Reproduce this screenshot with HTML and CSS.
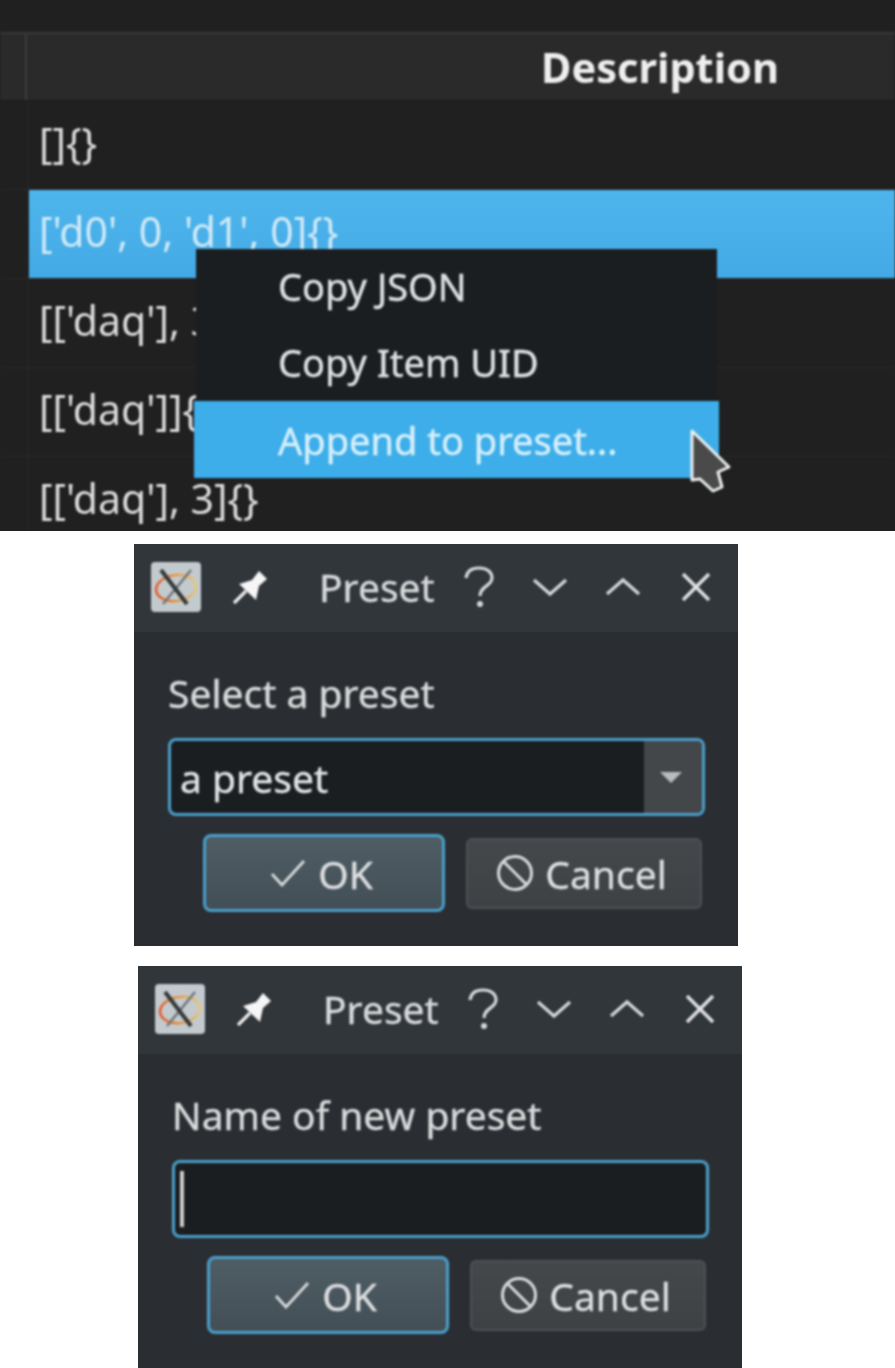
FILE: index.html
```html
<!DOCTYPE html>
<html lang="en">
<head>
  <meta charset="UTF-8" />
  <title>Preset dialogs</title>
  <link rel="stylesheet" href="styles.css">
</head>
<body>
  <svg class="defs" width="0" height="0">
    <defs>
      <linearGradient id="ring" x1="0" y1="0" x2="1" y2="0">
        <stop offset="0" stop-color="#df5a2c" />
        <stop offset="0.5" stop-color="#e8933f" />
        <stop offset="1" stop-color="#e6c77a" />
      </linearGradient>
    </defs>
    <symbol id="appIcon" viewBox="0 0 52 52">
      <rect x="1" y="1" width="50" height="50" rx="4" fill="#c3cacd" />
      <ellipse cx="26" cy="27" rx="20" ry="13" fill="none" stroke="url(#ring)" stroke-width="2.5" transform="rotate(-8 26 27)" />
      <path d="M41 9 L13 43" stroke="#6f7477" stroke-width="2.4" fill="none" />
      <path d="M11 9 L37 43" stroke="#33383b" stroke-width="4" fill="none" />
    </symbol>
    <symbol id="pin" viewBox="0 0 36 36">
      <path d="M2 34 L14 22" stroke="#eee" stroke-width="3.2" />
      <path d="M27 2 L35 10 L27 17 L24 31 L7 15 L20 11 Z" fill="#f6f6f6" />
    </symbol>
    <symbol id="help" viewBox="0 0 30 42">
      <path d="M2 12 C3 4 9 2 15 2 C23 2 28 6 28 12 C28 20 16 20 16 30" fill="none" stroke="#d6d8d9" stroke-width="3.2" />
      <circle cx="16" cy="38" r="3" fill="#d6d8d9" />
    </symbol>
    <symbol id="chevDown" viewBox="0 0 36 20">
      <path d="M2 3 L18 17 L34 3" fill="none" stroke="#d6d8d9" stroke-width="3.2" />
    </symbol>
    <symbol id="chevUp" viewBox="0 0 36 20">
      <path d="M2 17 L18 3 L34 17" fill="none" stroke="#d6d8d9" stroke-width="3.2" />
    </symbol>
    <symbol id="close" viewBox="0 0 30 30">
      <path d="M2 2 L28 28 M28 2 L2 28" fill="none" stroke="#e2e3e4" stroke-width="3.4" />
    </symbol>
    <symbol id="check" viewBox="0 0 36 28">
      <path d="M2 15 L12 26 L34 2" fill="none" stroke="#d8dadb" stroke-width="2.8" />
    </symbol>
    <symbol id="cancel" viewBox="0 0 38 38">
      <circle cx="19" cy="19" r="16.5" fill="none" stroke="#d8dadb" stroke-width="3" />
      <path d="M7 7 L31 31" stroke="#d8dadb" stroke-width="3" />
    </symbol>
  </svg>

  <div class="table-frame">
    <div class="table">
      <div class="topbar"></div>
      <div class="thead">
        <div class="corner"></div>
        <div class="th">Description</div>
      </div>
      <div class="row"><div class="row-head"></div><div class="cell">[]{}</div></div>
      <div class="row"><div class="row-head"></div><div class="cell selected">['d0', 0, 'd1', 0]{}</div></div>
      <div class="row"><div class="row-head"></div><div class="cell">[['daq'], 3, 4]{}</div></div>
      <div class="row"><div class="row-head"></div><div class="cell">[['daq']]{}</div></div>
      <div class="row last"><div class="row-head"></div><div class="cell">[['daq'], 3]{}</div></div>

      <div class="menu">
        <div class="menu-item">Copy JSON</div>
        <div class="menu-item">Copy Item UID</div>
        <div class="menu-item active">Append to preset...</div>
      </div>
      <svg class="cursor" width="42" height="64" viewBox="0 0 42 64">
        <path d="M2 2 L39 38 L28 43 L32 58 L23 62 L10 50 L2 51 Z" fill="#4a4a4a" stroke="#eceff0" stroke-width="3" stroke-linejoin="round" />
      </svg>
    </div>
  </div>

  <div class="dialog first">
    <div class="dialog-inner">
      <div class="titlebar">
        <svg class="app-icon"><use href="#appIcon" /></svg>
        <svg class="pin"><use href="#pin" /></svg>
        <span class="title">Preset</span>
        <svg class="help"><use href="#help" /></svg>
        <svg class="chev down"><use href="#chevDown" /></svg>
        <svg class="chev up"><use href="#chevUp" /></svg>
        <svg class="close"><use href="#close" /></svg>
      </div>
      <div class="content">
        <div class="label">Select a preset</div>
        <div class="field combo">
          <span class="combo-text">a preset</span>
          <span class="combo-btn"><span class="arrow"></span></span>
        </div>
        <div class="buttons">
          <div class="btn ok"><svg class="ico-check"><use href="#check" /></svg>OK</div>
          <div class="btn"><svg class="ico-cancel"><use href="#cancel" /></svg>Cancel</div>
        </div>
      </div>
    </div>
  </div>

  <div class="dialog second">
    <div class="dialog-inner">
      <div class="titlebar">
        <svg class="app-icon"><use href="#appIcon" /></svg>
        <svg class="pin"><use href="#pin" /></svg>
        <span class="title">Preset</span>
        <svg class="help"><use href="#help" /></svg>
        <svg class="chev down"><use href="#chevDown" /></svg>
        <svg class="chev up"><use href="#chevUp" /></svg>
        <svg class="close"><use href="#close" /></svg>
      </div>
      <div class="content">
        <div class="label">Name of new preset</div>
        <div class="field"><span class="caret"></span></div>
        <div class="buttons">
          <div class="btn ok"><svg class="ico-check"><use href="#check" /></svg>OK</div>
          <div class="btn"><svg class="ico-cancel"><use href="#cancel" /></svg>Cancel</div>
        </div>
      </div>
    </div>
  </div>
</body>
</html>
```

FILE: styles.css
```css
html, body {
  margin: 0;
  background: #fff;
}
body {
  width: 895px;
  height: 1368px;
  overflow: hidden;
  font-family: "Noto Sans", sans-serif;
  font-size: 39px;
  color: #d6d8d9;
  -webkit-text-stroke: 0.4px;
}
.defs {
  position: absolute;
}

/* table */
.table-frame {
  height: 531px;
  overflow: hidden;
  background: #202020;
}
.table {
  position: relative;
  height: 531px;
  filter: blur(0.8px);
}
.topbar {
  height: 32px;
  border-bottom: 2px solid #383838;
}
.thead {
  display: flex;
  height: 66px;
  background: #2a2a2a;
  border-bottom: 1px solid #1c1c1c;
}
.corner {
  width: 25px;
  border-right: 2px solid #3c3c3c;
}
.th {
  flex: 1;
  line-height: 66px;
  text-align: center;
  font-weight: 700;
  color: #eeeeee;
  font-size: 41.5px;
  padding-left: 398px;
  -webkit-text-stroke: 0;
}
.row {
  display: flex;
  height: 89px;
  box-sizing: border-box;
  border-bottom: 1px solid #2a2a2a;
}
.row-head {
  width: 28px;
  border-right: 1px solid #272727;
}
.cell {
  flex: 1;
  padding-left: 10px;
  line-height: 82px;
  font-size: 41px;
  color: #dcdcdc;
  -webkit-text-stroke: 0;
}
.cell.selected {
  background: linear-gradient(#4eb5ec, #43aae6);
  color: #cfe9f7;
}
.row.last {
  border-bottom: none;
  height: 75px;
}

/* context menu */
.menu {
  position: absolute;
  left: 196px;
  top: 249px;
  width: 521px;
  background: #1b1e20;
  font-size: 38px;
}
.menu-item {
  height: 76px;
  line-height: 75px;
  padding-left: 82px;
  color: #dfe0e1;
}
.menu-item.active {
  height: 77px;
  line-height: 78px;
  margin: 0 -2px;
  padding-left: 84px;
  background: #3daee9;
  color: #d6effb;
}
.cursor {
  position: absolute;
  left: 690px;
  top: 429px;
}

/* dialogs */
.dialog {
  width: 604px;
  height: 402px;
  overflow: hidden;
  background: linear-gradient(#31363b 88px, #2a2e32 88px);
}
.dialog-inner {
  height: 402px;
  filter: blur(0.8px);
}
.first {
  margin: 13px 0 0 134px;
}
.second {
  margin: 20px 0 0 138px;
}
.titlebar {
  display: flex;
  align-items: center;
  box-sizing: border-box;
  height: 88px;
  padding: 0 0 3px 16px;
}
.app-icon {
  width: 52px;
  height: 52px;
}
.pin {
  width: 36px;
  height: 36px;
  margin-left: 30px;
}
.title {
  margin-left: 51px;
  color: #d8dadb;
  width: 117px;
}
.help {
  width: 30px;
  height: 42px;
  margin-left: 28px;
}
.chev {
  width: 36px;
  height: 20px;
}
.chev.down {
  margin-left: 38px;
}
.chev.up {
  margin-left: 37px;
}
.close {
  width: 30px;
  height: 30px;
  margin-left: 40px;
}
.content {
  padding: 40px 33px 0 34px;
}
.label {
  height: 44px;
  line-height: 42px;
  color: #d8dadb;
}
.field {
  display: flex;
  align-items: center;
  height: 78px;
  box-sizing: border-box;
  margin-top: 22px;
  background: #1b1e20;
  border: 3px solid #4a9fcb;
  border-radius: 8px;
  overflow: hidden;
}
.combo-text {
  flex: 1;
  padding-left: 9px;
  color: #e2e3e4;
}
.combo-btn {
  display: flex;
  align-items: center;
  justify-content: center;
  box-sizing: border-box;
  width: 58px;
  height: 100%;
  padding-right: 5px;
  background: #44474a;
}
.arrow {
  width: 0;
  height: 0;
  border-left: 11px solid transparent;
  border-right: 11px solid transparent;
  border-top: 11px solid #b9bbbd;
}
.caret {
  width: 4px;
  height: 56px;
  margin-left: 5px;
  background: #cfcccb;
}
.buttons {
  display: flex;
  align-items: center;
  justify-content: flex-end;
  gap: 21px;
  height: 78px;
  margin-top: 18px;
  padding-right: 3px;
}
.btn {
  display: flex;
  align-items: center;
  justify-content: center;
  box-sizing: border-box;
  width: 236px;
  height: 71px;
  padding-right: 5px;
  background: linear-gradient(#45484b, #3f4245);
  border: 2px solid #4e5154;
  border-radius: 6px;
  color: #dcdee0;
}
.btn.ok {
  width: 242px;
  height: 78px;
  background: linear-gradient(#4f5d65, #434f56);
  border: 3px solid #4a9fcb;
  border-radius: 8px;
}
.ico-check {
  width: 36px;
  height: 28px;
  margin-right: 12px;
}
.ico-cancel {
  width: 38px;
  height: 38px;
  margin-right: 11px;
}
```
